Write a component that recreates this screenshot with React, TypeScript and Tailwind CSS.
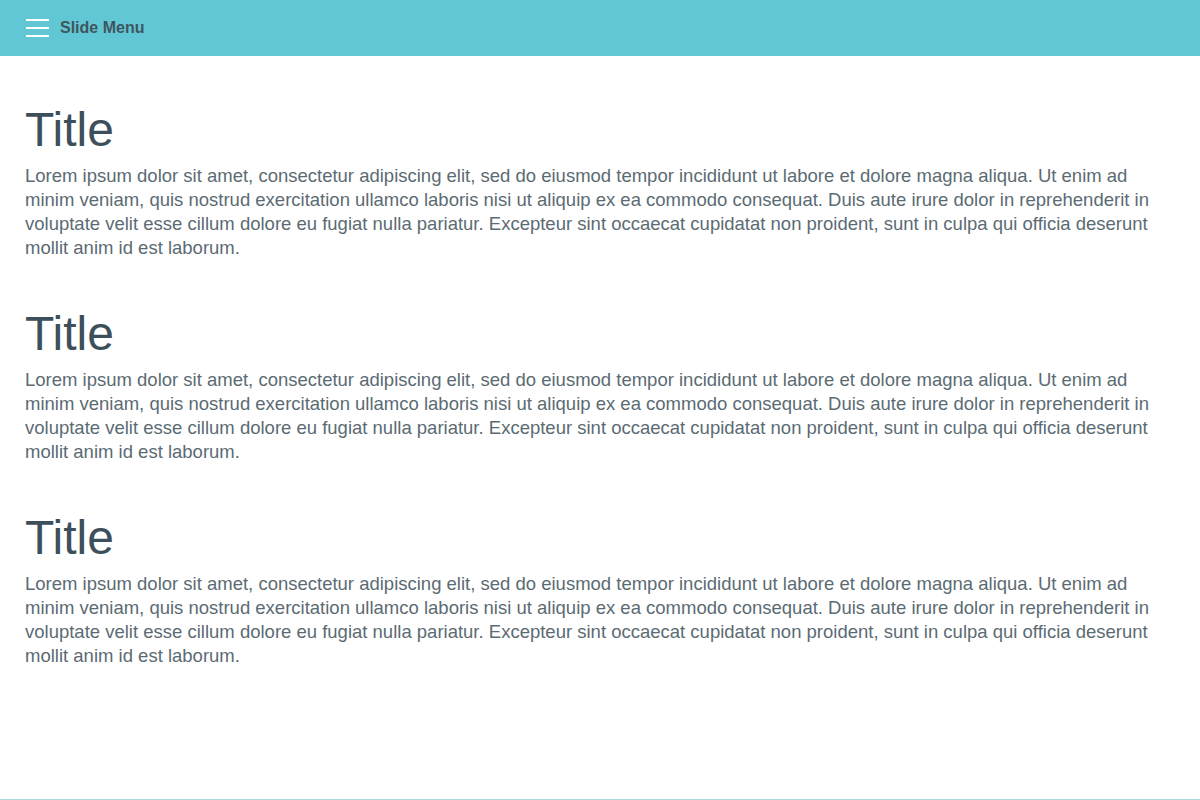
import React from "react";

const LOREM =
  "Lorem ipsum dolor sit amet, consectetur adipiscing elit, sed do eiusmod tempor incididunt ut labore et dolore magna aliqua. Ut enim ad minim veniam, quis nostrud exercitation ullamco laboris nisi ut aliquip ex ea commodo consequat. Duis aute irure dolor in reprehenderit in voluptate velit esse cillum dolore eu fugiat nulla pariatur. Excepteur sint occaecat cupidatat non proident, sunt in culpa qui officia deserunt mollit anim id est laborum.";

export default function App() {
  return (
    <div
      className="w-[1200px] h-[800px] bg-white flex flex-col border-b border-[#a6ddd9]"
      style={{ fontFamily: '"Liberation Sans", Arial, sans-serif' }}
    >
      <header className="h-[56px] bg-[#62c7d4] flex items-center pl-[26px] shrink-0">
        <div className="flex flex-col gap-[6px] w-[23px]">
          <span className="block h-[2px] bg-white" />
          <span className="block h-[2px] bg-white" />
          <span className="block h-[2px] bg-white" />
        </div>
        <span className="ml-[11px] text-[16px] font-bold text-[#3e5560]">Slide Menu</span>
      </header>
      <main className="flex flex-col gap-[50px] px-[25px] pt-[50px]">
        {[0, 1, 2].map((i) => (
          <section key={i} className="flex flex-col">
            <h1 className="text-[48px] leading-[48px] text-[#3d4f5a]">Title</h1>
            <p className="mt-[10px] text-[18.5px] leading-[24px] text-[#5b6b73]">{LOREM}</p>
          </section>
        ))}
      </main>
    </div>
  );
}
